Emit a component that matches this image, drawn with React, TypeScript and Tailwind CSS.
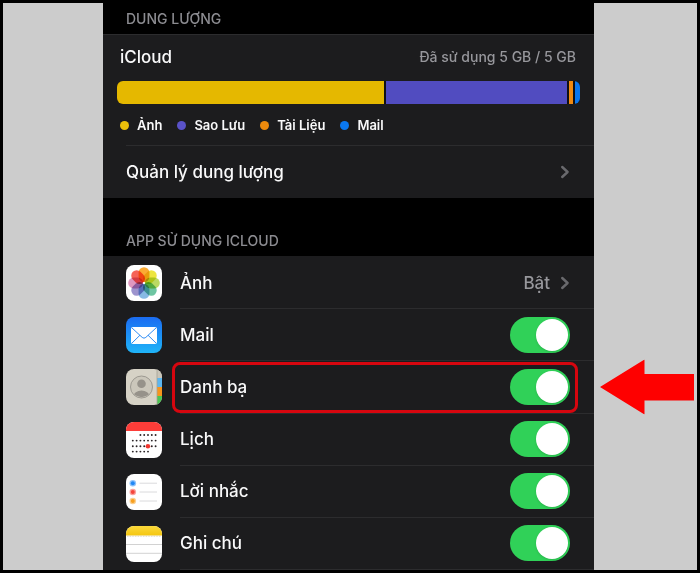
import type { ReactNode } from "react";
import { useState } from "react";

const petals = [
  "#fba423",
  "#ece32f",
  "#b4d656",
  "#62c09a",
  "#7db4e2",
  "#958bca",
  "#dc8fbb",
  "#f4574a",
];

function PhotosIcon() {
  return (
    <svg viewBox="0 0 36 36" className="size-9" aria-hidden="true">
      <rect width="36" height="36" rx="8" fill="#fff" />
      <g style={{ isolation: "isolate" }}>
        {petals.map((color, i) => (
          <rect
            key={color}
            x="12.6"
            y="2.2"
            width="10.8"
            height="15"
            rx="5.4"
            fill={color}
            fillOpacity="0.92"
            transform={`rotate(${i * 45} 18 18)`}
            style={{ mixBlendMode: "multiply" }}
          />
        ))}
      </g>
      <circle cx="18" cy="18" r="1.1" fill="#fff" />
    </svg>
  );
}

function MailIcon() {
  return (
    <svg viewBox="0 0 36 36" className="size-9" aria-hidden="true">
      <defs>
        <linearGradient id="mail-sky" x1="0" y1="0" x2="0" y2="1">
          <stop offset="0" stopColor="#1b6cf2" />
          <stop offset="1" stopColor="#1fb4f8" />
        </linearGradient>
      </defs>
      <rect width="36" height="36" rx="8" fill="url(#mail-sky)" />
      <rect x="5" y="10" width="26" height="17" rx="2" fill="#fff" />
      <path
        d="M5.8 10.8 16.2 20.4q1.8 1.6 3.6 0L30.2 10.8M5.8 26.2l8.2-8M30.2 26.2l-8.2-8"
        fill="none"
        stroke="#2f8df5"
        strokeWidth="1"
      />
    </svg>
  );
}

function ContactsIcon() {
  return (
    <svg viewBox="0 0 36 36" className="size-9" aria-hidden="true">
      <defs>
        <clipPath id="contacts-tile">
          <rect width="36" height="36" rx="8" />
        </clipPath>
        <clipPath id="contacts-face">
          <circle cx="15.5" cy="18" r="10.2" />
        </clipPath>
      </defs>
      <g clipPath="url(#contacts-tile)">
        <rect width="36" height="36" fill="#d6d2c6" />
        <rect x="31" width="5" height="9" fill="#c9c5b9" />
        <rect x="31" y="9" width="5" height="9" fill="#5cb6f0" />
        <rect x="31" y="18" width="5" height="9" fill="#f7951d" />
        <rect x="31" y="27" width="5" height="9" fill="#4cc552" />
        <path d="M31 0v36" stroke="#a5a196" strokeWidth="0.8" />
      </g>
      <circle cx="15.5" cy="18" r="11" fill="#cbc7bb" stroke="#96938b" strokeWidth="0.9" />
      <g clipPath="url(#contacts-face)" fill="#96928a">
        <circle cx="15.5" cy="14.8" r="4.3" />
        <ellipse cx="15.5" cy="27" rx="8" ry="5.4" />
      </g>
    </svg>
  );
}

const calendarRows = [
  { y: 13, from: 2, to: 6 },
  { y: 18.6, from: 0, to: 6 },
  { y: 24.2, from: 0, to: 6 },
  { y: 29.6, from: 0, to: 4 },
];

function CalendarIcon() {
  return (
    <svg viewBox="0 0 36 36" className="size-9" aria-hidden="true">
      <rect width="36" height="36" rx="8" fill="#fff" />
      <path d="M8 0h20a8 8 0 0 1 8 8v1H0V8a8 8 0 0 1 8-8z" fill="#fc3d39" />
      {calendarRows.map((row) =>
        Array.from({ length: row.to - row.from + 1 }, (_, i) => (
          <circle
            key={`${row.y}-${i}`}
            cx={6.8 + (row.from + i) * 3.8}
            cy={row.y}
            r="0.95"
            fill="#2a2426"
          />
        )),
      )}
      <circle cx="21.9" cy="24.2" r="2.3" fill="#f0372f" />
    </svg>
  );
}

const reminderDots = [
  { y: 9.2, color: "#2188f5" },
  { y: 18, color: "#f5453c" },
  { y: 27, color: "#f8a01f" },
];

function RemindersIcon() {
  return (
    <svg viewBox="0 0 36 36" className="size-9" aria-hidden="true">
      <rect width="36" height="36" rx="8" fill="#fff" />
      {reminderDots.map((dot) => (
        <g key={dot.color}>
          <circle cx="6.8" cy={dot.y} r="3.3" fill={dot.color} fillOpacity="0.5" />
          <circle cx="6.8" cy={dot.y} r="2" fill={dot.color} />
          <path d={`M13.5 ${dot.y}H31`} stroke="#d6d6d8" strokeWidth="0.9" />
        </g>
      ))}
    </svg>
  );
}

function NotesIcon() {
  return (
    <svg viewBox="0 0 36 36" className="size-9" aria-hidden="true">
      <defs>
        <linearGradient id="notes-band" x1="0" y1="0" x2="0" y2="1">
          <stop offset="0" stopColor="#fbd93c" />
          <stop offset="1" stopColor="#f5c60f" />
        </linearGradient>
      </defs>
      <rect width="36" height="36" rx="8" fill="#fff" />
      <path d="M8 0h20a8 8 0 0 1 8 8v1.6H0V8a8 8 0 0 1 8-8z" fill="url(#notes-band)" />
      <path d="M1 10.2h34" stroke="#c9bf9a" strokeWidth="0.8" strokeDasharray="0.8 0.8" />
      <path d="M0 18.5h36M0 27.3h36" stroke="#cdcdcd" strokeWidth="0.9" />
    </svg>
  );
}

function Chevron() {
  return (
    <svg viewBox="0 0 10 14" className="h-3.5 w-2.5 text-[#69696d]" aria-hidden="true">
      <path
        d="M2.2 2 7.6 7 2.2 12"
        fill="none"
        stroke="currentColor"
        strokeWidth="2.4"
        strokeLinecap="round"
        strokeLinejoin="round"
      />
    </svg>
  );
}

function Arrow() {
  return (
    <svg
      viewBox="0 0 94 55"
      className="absolute top-1/2 left-full ml-1.5 w-[94px] -translate-y-1/2"
      aria-hidden="true"
    >
      <path d="M0 27.5 44.5 0v14.5H94v26.5H44.5V55z" fill="#fe0000" />
    </svg>
  );
}

const legend = [
  { label: "Ảnh", dot: "bg-[#edc00a]" },
  { label: "Sao Lưu", dot: "bg-[#5a52c8]" },
  { label: "Tài Liệu", dot: "bg-[#ee8a0c]" },
  { label: "Mail", dot: "bg-[#0a78f0]" },
];

type App = { id: string; label: string; icon: ReactNode; highlighted?: boolean };

const apps: App[] = [
  { id: "mail", label: "Mail", icon: <MailIcon /> },
  { id: "contacts", label: "Danh bạ", icon: <ContactsIcon />, highlighted: true },
  { id: "calendar", label: "Lịch", icon: <CalendarIcon /> },
  { id: "reminders", label: "Lời nhắc", icon: <RemindersIcon /> },
  { id: "notes", label: "Ghi chú", icon: <NotesIcon /> },
];

function AppRow({ id, label, icon, highlighted }: App) {
  const [on, setOn] = useState(true);
  return (
    <li className="relative flex gap-[18px] pl-[23px]">
      <span className="flex items-center">{icon}</span>
      <div className="flex flex-1 items-center justify-between border-b border-[#2c2c2e] pr-6">
        <label htmlFor={id}>{label}</label>
        <input
          id={id}
          type="checkbox"
          role="switch"
          checked={on}
          onChange={(e) => setOn(e.target.checked)}
          className="h-9 w-[60px] cursor-pointer appearance-none rounded-full bg-[#39393d] p-0.5 before:block before:size-8 before:rounded-full before:bg-white before:shadow-sm checked:bg-[#30d158] checked:before:translate-x-6"
        />
      </div>
      {highlighted && (
        <>
          <span className="pointer-events-none absolute inset-y-px right-4 left-[69px] rounded-lg border-3 border-[#d6060f]" />
          <Arrow />
        </>
      )}
    </li>
  );
}

export default function App() {
  return (
    <div className="grid min-h-screen grid-cols-[100fr_491fr_103fr] border-3 border-black bg-[#cccccc] font-['Inter','Liberation_Sans',sans-serif] text-[17px] leading-6 font-medium text-[#f9f9fa]">
      <main className="col-start-2 flex flex-col bg-[#1c1c1e]">
        <h2 className="bg-black px-[23px] pt-1.5 pb-[5px] text-[14px] leading-5 font-medium text-[#8c8c91]">
          DUNG LƯỢNG
        </h2>

        <section className="border-t border-[#2c2c2e]">
          <div className="flex items-center justify-between pt-2.5 pr-[18px] pl-[17px]">
            <h3>iCloud</h3>
            <p className="text-[14px] font-medium text-[#97979c]">Đã sử dụng 5 GB / 5 GB</p>
          </div>
          <div className="mt-3 mr-3.5 ml-3.5 flex h-[23px] gap-0.5 overflow-hidden rounded-md bg-[#101014]">
            <span className="grow-268 bg-[#e5b800]" />
            <span className="grow-182 bg-[#514cc0]" />
            <span className="w-1 bg-[#f28a0f]" />
            <span className="w-[5px] bg-[#0a76ee]" />
          </div>
          <ul className="mt-[11px] flex gap-[15px] pl-[17px] text-[13px] leading-5 font-semibold">
            {legend.map((item) => (
              <li key={item.label} className="flex items-center gap-2">
                <span className={`size-[9px] rounded-full ${item.dot}`} />
                {item.label}
              </li>
            ))}
          </ul>
          <button
            type="button"
            className="mt-2.5 ml-[23px] flex h-[53px] w-[calc(100%-23px)] cursor-pointer items-center justify-between border-t border-[#2c2c2e] pr-6 text-left"
          >
            Quản lý dung lượng
            <Chevron />
          </button>
        </section>

        <h2 className="bg-black px-[23px] pt-[33px] pb-[5px] text-[14px] leading-5 font-medium text-[#8c8c91]">
          APP SỬ DỤNG ICLOUD
        </h2>

        <ul className="grid flex-1 auto-rows-fr border-t border-[#1c1c1e]">
          <li className="flex min-h-[52px] gap-[18px] pl-[23px]">
            <span className="flex items-center">
              <PhotosIcon />
            </span>
            <button
              type="button"
              className="flex flex-1 cursor-pointer items-center border-b border-[#2c2c2e] pr-6 text-left"
            >
              <span className="flex-1">Ảnh</span>
              <span className="mr-2.5 text-[#97979c]">Bật</span>
              <Chevron />
            </button>
          </li>
          {apps.map((app) => (
            <AppRow key={app.id} {...app} />
          ))}
        </ul>
      </main>
    </div>
  );
}
